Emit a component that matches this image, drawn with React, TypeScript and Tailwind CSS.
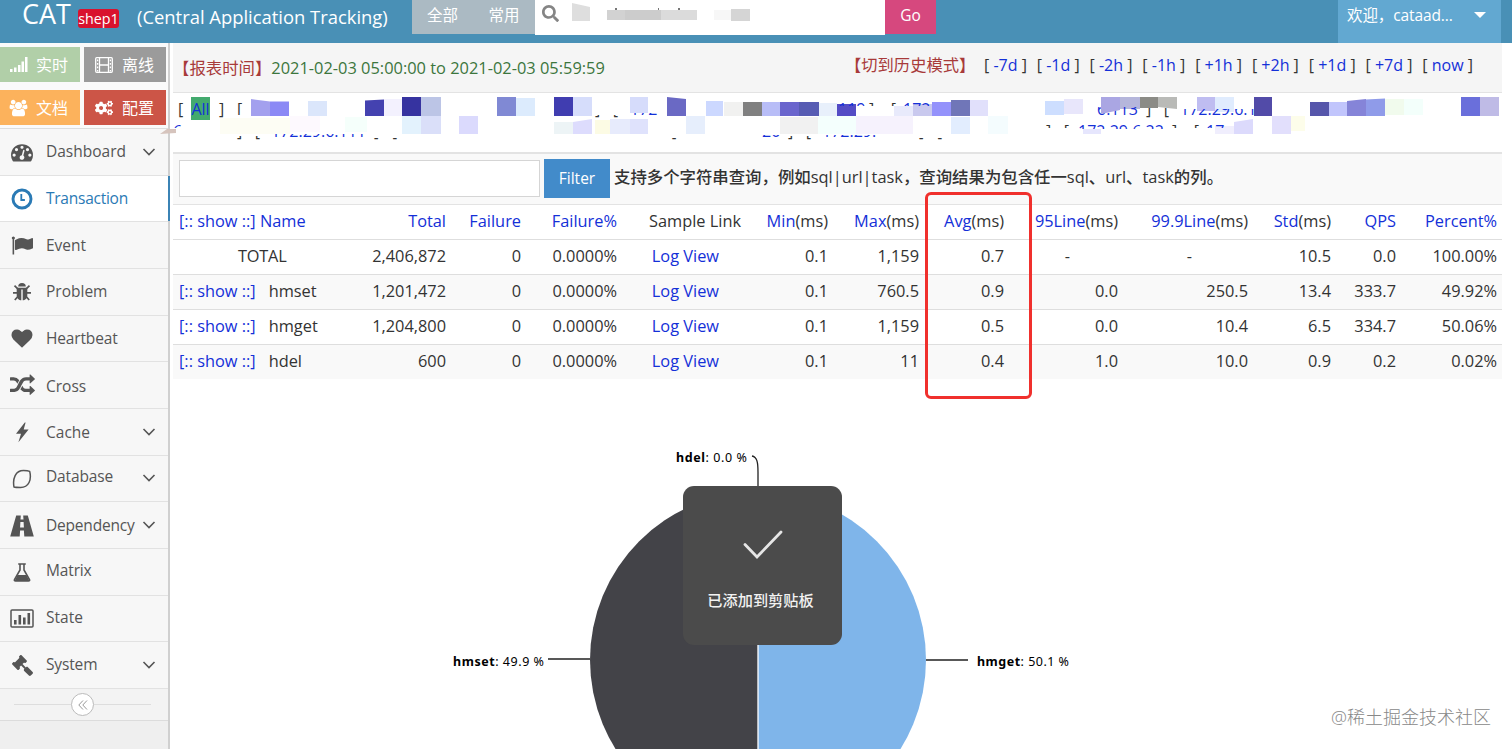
import React from "react";
import { FaCogs, FaGavel, FaSearch } from "react-icons/fa";

type IconName =
  | "dashboard" | "clock" | "flag" | "bug" | "heart" | "random" | "bolt"
  | "leaf" | "road" | "flask" | "chart" | "gavel";

function Icon({ name }: { name: IconName }) {
  switch (name) {
    case "dashboard":
      return (
        <svg width="22" height="22" viewBox="0 0 1792 1792" fill="currentColor">
          <path d="M384 1152q0-53-37.5-90.5t-90.5-37.5-90.5 37.5-37.5 90.5 37.5 90.5 90.5 37.5 90.5-37.5 37.5-90.5zm192-448q0-53-37.5-90.5t-90.5-37.5-90.5 37.5-37.5 90.5 37.5 90.5 90.5 37.5 90.5-37.5 37.5-90.5zm428 481l101-382q6-26-7.5-48.5t-38.5-29.5-48 6.5-30 39.5l-101 382q-60 5-107 43.5t-63 98.5q-20 77 20 146t117 89 146-20 89-117q16-60-6-117t-72-91zm660-33q0-53-37.5-90.5t-90.5-37.5-90.5 37.5-37.5 90.5 37.5 90.5 90.5 37.5 90.5-37.5 37.5-90.5zm-640-640q0-53-37.5-90.5t-90.5-37.5-90.5 37.5-37.5 90.5 37.5 90.5 90.5 37.5 90.5-37.5 37.5-90.5zm448 192q0-53-37.5-90.5t-90.5-37.5-90.5 37.5-37.5 90.5 37.5 90.5 90.5 37.5 90.5-37.5 37.5-90.5zm320 448q0 261-141 483-19 29-54 29h-1402q-35 0-54-29-141-221-141-483 0-182 71-348t191-286 286-191 348-71 348 71 286 191 191 286 71 348z" />
        </svg>
      );
    case "clock":
      return (
        <svg width="22" height="22" viewBox="0 0 22 22" fill="none" stroke="currentColor">
          <circle cx="11" cy="11" r="9" strokeWidth="2.9" />
          <path d="M11.200 6v6H7.600" strokeWidth="1.800" transform="matrix(-1 0 0 1 21.500 0)" />
        </svg>
      );
    case "flag":
      return (
        <svg width="22" height="21" viewBox="0 0 1792 1792" fill="currentColor" preserveAspectRatio="none">
          <path d="M320 256q0 72-64 110v1266q0 13-9.5 22.5t-22.5 9.5h-64q-13 0-22.5-9.5t-9.5-22.5v-1266q-64-38-64-110 0-53 37.5-90.5t90.5-37.5 90.5 37.5 37.5 90.5zm1472 64v763q0 25-12.5 38.5t-39.5 27.5q-215 116-369 116-61 0-123.5-22t-108.5-48-115.5-48-142.5-22q-192 0-464 146-17 9-33 9-26 0-45-19t-19-45v-742q0-32 31-55 21-14 79-43 236-120 421-120 107 0 200 29t219 88q38 19 88 19 54 0 117.5-21t110-47 88-47 54.5-21q26 0 45 19t19 45z" />
        </svg>
      );
    case "bug":
      return (
        <svg width="20" height="20" viewBox="0 0 20 20">
          <path d="M6.200 4.600a3.800 3.600 0 0 1 7.600 0z" fill="currentColor" />
          <path d="M4.700 5.800h10.600v7.400c0 3-2.300 5-4.600 5.100V7.400H9.300v10.900c-2.300-.1-4.600-2.100-4.600-5.100z" fill="currentColor" />
          <path d="M2.500 3.600 5.800 6.800M17.500 3.600l-3.300 3.200M1 10.800h4.500M19 10.800h-4.500M2.800 18l3.200-3.600M17.200 18 14 14.400" stroke="currentColor" strokeWidth="1.700" fill="none" />
        </svg>
      );
    case "heart":
      return (
        <svg width="22" height="21" viewBox="0 0 1792 1792" fill="currentColor">
          <path d="M896 1664q-26 0-44-18l-624-602q-10-8-27.5-26t-55.5-65.5-68-97.5-53.5-121-23.5-138q0-220 127-344t351-124q62 0 126.5 21.5t120 58 95.5 68.5 76 68q36-36 76-68t95.5-68.5 120-58 126.500-21.500q224 0 351 124t127 344q0 221-229 450l-623 600q-18 18-44 18z" />
        </svg>
      );
    case "random":
      return (
        <svg width="25" height="23" viewBox="0 0 1792 1792" fill="currentColor" preserveAspectRatio="none">
          <path d="M666 481q-60 92-137 273-22-45-37-72.500t-40.500-63.500-51-56.500-63-35-81.500-14.500h-224q-14 0-23-9t-9-23v-192q0-14 9-23t23-9h224q250 0 410 225zm1126 799q0 14-9 23l-320 320q-9 9-23 9-13 0-22.500-9.500t-9.500-22.500v-192q-32 0-85 .5t-81 1-73-1-71-5-64-10.500-63-18.500-58-28.500-59-40-55-53.500-56-69.500q59-93 136-273 22 45 37 72.500t40.500 63.500 51 56.500 63 35 81.500 14.500h256v-192q0-14 9-23t23-9q12 0 24 10l319 319q9 9 9 23zm0-896q0 14-9 23l-320 320q-9 9-23 9-13 0-22.500-9.500t-9.500-22.500v-192h-256q-48 0-87 15t-69 45-51 61.500-45 77.500q-32 62-78 171-29 66-49.500 111t-54 105-64 100-74 83-90 68.500-106.500 42-128 16.500h-224q-14 0-23-9t-9-23v-192q0-14 9-23t23-9h224q48 0 87-15t69-45 51-61.500 45-77.500q32-62 78-171 29-66 49.500-111t54-105 64-100 74-83 90-68.500 106.500-42 128-16.500h256v-192q0-14 9-23t23-9q12 0 24 10l319 319q9 9 9 23z" />
        </svg>
      );
    case "bolt":
      return (
        <svg width="14" height="21" viewBox="0 0 14 21" fill="currentColor">
          <path d="M9.800.5 1 11.800h5L3.400 20.300 13.600 7.600H8.700L10.600.5z" />
        </svg>
      );
    case "leaf":
      return (
        <svg width="20" height="20" viewBox="0 0 20 20" fill="none" stroke="currentColor" strokeWidth="1.500" strokeLinejoin="round">
          <path d="M2 18C.4 9.500 3.500 1.500 11.500 1.500c2.500 0 5 .3 6.200.9C19.700 10.500 17 18.500 8.500 18.500c-2.500 0-5 0-6.500-.5z" />
        </svg>
      );
    case "road":
      return (
        <svg width="24" height="22" viewBox="0 0 24 22" fill="currentColor">
          <path d="M6.200.5h4.600l-.3 4h3l-.3-4h4.600L23.800 21.500h-9.500l-.4-6h-3.800l-.4 6H.2zM10.400 7l-.3 5.500h3.800L13.600 7z" fillRule="evenodd" />
        </svg>
      );
    case "flask":
      return (
        <svg width="18" height="19" viewBox="0 0 18 19">
          <path d="M5.200 1h7.600M7 1v6L1.500 16.500c-.4.9 0 1.500 1 1.500h13c1 0 1.400-.6 1-1.500L11 7V1" fill="none" stroke="currentColor" strokeWidth="1.600" />
          <path d="M4.500 12h9l3 6h-15z" fill="currentColor" />
        </svg>
      );
    case "chart":
      return (
        <svg width="24" height="19" viewBox="0 0 24 19" fill="currentColor">
          <rect x="1" y="1" width="22" height="17" rx="1" fill="none" stroke="currentColor" strokeWidth="1.500" />
          <path d="M4 11h2.600v4.600H4zM8.500 6h2.600v9.600H8.500zM13 8.500h2.600v7.100H13zM17.500 4h2.600v11.600h-2.600z" />
        </svg>
      );
    case "gavel":
      return <FaGavel size={21} className="-scale-x-100" />;
  }
}

interface MenuEntry { label: string; icon: IconName; open?: boolean; active?: boolean; shift: string }

const MENU: MenuEntry[] = [
  { label: "Dashboard", icon: "dashboard", open: true, shift: "" },
  { label: "Transaction", icon: "clock", active: true, shift: "pt-px tracking-[-0.25px]" },
  { label: "Event", icon: "flag", shift: "" },
  { label: "Problem", icon: "bug", shift: "pb-px" },
  { label: "Heartbeat", icon: "heart", shift: "tracking-[-0.15px]" },
  { label: "Cross", icon: "random", shift: "pt-0.5" },
  { label: "Cache", icon: "bolt", open: true, shift: "pt-0.5" },
  { label: "Database", icon: "leaf", open: true, shift: "pb-[3px] tracking-[-0.15px]" },
  { label: "Dependency", icon: "road", open: true, shift: "tracking-[-0.2px]" },
  { label: "Matrix", icon: "flask", shift: "pb-0.5 tracking-[-0.15px]" },
  { label: "State", icon: "chart", shift: "pb-0.5" },
  { label: "System", icon: "gavel", open: true, shift: "pb-0.5 tracking-[-0.15px]" },
];

function Header() {
  return (
    <header className="flex h-[43px] items-start bg-[#4990b6] text-white">
      <div className="flex w-[412px] shrink-0 whitespace-nowrap pl-[22px]">
        <span className="w-[56px] text-[27px] leading-[28px]">CAT</span>
        <span className="mt-[9px] h-[19px] w-[41px] rounded-[3px] bg-[#d9122e] text-center text-[14.300px] leading-[19px]">shep1</span>
        <span className="mt-[4px] ml-[18px] text-[18.400px] leading-[26px]">(Central Application Tracking)</span>
      </div>
      <div className="flex h-[34px] w-[123px] shrink-0 bg-[#abbac3] text-[15.500px] leading-[31px]">
        <span className="w-[61px] text-center">全部</span>
        <span className="w-[62px] text-center">常用</span>
      </div>
      <div className="flex h-[35px] w-[350px] shrink-0 bg-white pl-[7px]">
        <FaSearch className="mt-[5px] shrink-0 text-[#858585]" size={17} />
        <svg width="220" height="24" className="ml-[13px] shrink-0">
          <path d="M-11 5H0v12h-11z" fill="#f9f9f9" />
          <path d="M0 3l18 4v14H0z" fill="#dedede" />
          <path d="M35 10h55v10H35z" fill="#d2d2d2" />
          <path d="M53 10h36v10H53z" fill="#cccccc" />
          <path d="M89 10h36v10H89z" fill="#dbdbdb" />
          <path d="M142 10h17v10h-17z" fill="#f7f7f7" />
          <path d="M159 9h19v12h-19z" fill="#d5d5d5" />
          <path d="M43 8h2v2h-2zM86 8h1v2h-1zM106 8h2v2h-2z" fill="#777" />
        </svg>
      </div>
      <div className="h-[34px] w-[51px] shrink-0 bg-[#d6487e] text-center text-[15.500px] leading-[31px]">Go</div>
      <div className="ml-auto mr-[11px] flex h-[43px] w-[163px] bg-[#62a8d1] pl-[9px] text-[15.500px] leading-[31px]">
        <span className="w-[127px] whitespace-nowrap tracking-[-0.1px]">欢迎，cataad...</span>
        <svg width="12" height="8" className="mt-[12px]"><path d="M0 0h12L6 6z" fill="#fff" /></svg>
      </div>
    </header>
  );
}

function Shortcuts() {
  return (
    <div className="grid h-[86px] grid-cols-[80px_82px] grid-rows-[35px_35px] gap-x-1 gap-y-[8px] border-b border-[#ddd] bg-[#fafafa] pt-[4px] text-[16px] text-white">
      <div className="flex items-center bg-[#b1cfa8] pl-[10px]">
        <svg width="18" height="15" fill="#fff"><path d="M0 12h2.500v3H0zM4 10.500h2.500V15H4zM8 8h2.500v7H8zM11.500 4.500H14V15h-2.500zM15 0h2.500v15H15z" /></svg>
        <span className="ml-[8px]">实时</span>
      </div>
      <div className="flex items-center bg-[#9b9b9b] pl-[11px]">
        <svg width="18" height="16" fill="none" stroke="#fff" strokeWidth="1.300">
          <rect x=".7" y=".7" width="16.600" height="14.600" rx="1" />
          <path d="M4.500 1v14M13.500 1v14M4.500 8h9" />
          <path d="M2.600 2.500v12M15.400 2.500v12" strokeDasharray="1.800 1.700" />
        </svg>
        <span className="ml-[9px]">离线</span>
      </div>
      <div className="flex items-center bg-[#fcb25c] pl-[9px]">
        <svg width="19" height="18" viewBox="0 0 2048 1792" fill="#fff">
          <path d="M657 896q-162 5-265 128h-134q-82 0-138-40.500t-56-118.500q0-353 124-353 6 0 43.500 21t97.500 42.500 119 21.500q67 0 133-23-5 37-5 66 0 139 81 256zm1071 637q0 120-73 189.500t-194 69.500h-874q-121 0-194-69.500t-73-189.500q0-53 3.500-103.500t14-109 26.500-108.500 43-97.500 62-81 85.500-53.500 111.500-20q10 0 43 21.500t73 48 107 48 135 21.500 135-21.500 107-48 73-48 43-21.500q61 0 111.500 20t85.500 53.500 62 81 43 97.500 26.500 108.500 14 109 3.500 103.500zm-1024-1277q0 106-75 181t-181 75-181-75-75-181 75-181 181-75 181 75 75 181zm704 384q0 159-112.500 271.500t-271.500 112.500-271.500-112.500-112.500-271.500 112.500-271.500 271.500-112.500 271.500 112.500 112.500 271.500zm576 225q0 78-56 118.500t-138 40.500h-134q-103-123-265-128 81-117 81-256 0-29-5-66 66 23 133 23 59 0 119-21.500t97.500-42.500 43.500-21q124 0 124 353zm-128-609q0 106-75 181t-181 75-181-75-75-181 75-181 181-75 181 75 75 181z" />
        </svg>
        <span className="ml-[8px]">文档</span>
      </div>
      <div className="flex items-center bg-[#cc5547] pl-[11px]">
        <FaCogs size={18} />
        <span className="ml-[9px]">配置</span>
      </div>
    </div>
  );
}

function Sidebar() {
  return (
    <aside className="flex w-[170px] shrink-0 flex-col border-r-2 border-[#d0d0d0] bg-[#efefef]">
      <Shortcuts />
      <nav className="grid h-[560px] grid-rows-12 bg-[#f7f7f7] text-[15.500px] text-[#555]">
        {MENU.map((m) => (
          <div
            key={m.label}
            className={
              "relative flex items-center border-b border-[#e2e2e2] " +
              (m.active ? "bg-white text-[#2a7ab5]" : "")
            }
          >
            <span className="flex w-[44px] justify-center pt-[1px]"><Icon name={m.icon} /></span>
            <span className={"ml-[2px] w-[95px] whitespace-nowrap " + m.shift}>{m.label}</span>
            {m.open && (
              <svg width="14" height="10" className="ml-px" fill="none" stroke="currentColor" strokeWidth="1.600"><path d="M1.500 2 7 7.500 12.500 2" /></svg>
            )}
            {m.active && <span className="absolute top-0 -right-[2px] h-full w-[2px] bg-[#3b83b5]" />}
          </div>
        ))}
      </nav>
      <div className="flex h-[32px] items-center border-b border-[#dcdcdc] bg-[#f3f3f3] pl-[14px]">
        <span className="h-px w-[57px] bg-[#ddd]" />
        <span className="flex h-[23px] w-[23px] items-center justify-center rounded-full border border-[#bbb] bg-white">
          <svg width="10" height="10" fill="none" stroke="#999"><path d="M5 .5.800 5 5 9.500M9 .5 4.800 5 9 9.500" /></svg>
        </span>
        <span className="h-px w-[57px] bg-[#ddd]" />
      </div>
    </aside>
  );
}

const STEPS = ["-7d", "-1d", "-2h", "-1h", "+1h", "+2h", "+1d", "+7d", "now"];

function ReportBar() {
  return (
    <div className="flex h-[50px] border-b border-[#e3e3e3] bg-[#f5f5f5] whitespace-nowrap">
      <div className="w-[672px] pt-[12px] text-[16.400px] leading-[26px] text-[#3c763d]">
        <span className="text-[#a83a3a]">【报表时间】</span>2021-02-03 05:00:00 to 2021-02-03 05:59:59
      </div>
      <div className="pt-[9px] text-[16.300px] leading-[26px] text-[#a83a3a]">【切到历史模式】</div>
      <div className="ml-auto mr-[29px] flex w-[489px] shrink-0 justify-between pt-[9px] text-[16px] leading-[26px] text-[#333]">
        {STEPS.map((s) => (
          <span key={s}>[ <a className="text-[#1430d8]">{s}</a> ]</span>
        ))}
      </div>
    </div>
  );
}

// x, y, width, height, colour of every block that masks an address
const BLOCKS: [number, number, number, number, string][] = [
  [308, 101, 19, 15, "#dbe6fb"], [384, 99, 18, 17, "#f3f1fe"], [402, 97, 19, 19, "#3633a0"],
  [421, 97, 20, 19, "#bcc5e6"], [497, 97, 19, 19, "#8089d4"], [516, 98, 19, 18, "#dcebfd"],
  [554, 97, 19, 19, "#403db0"], [573, 97, 19, 19, "#d6ddfb"], [630, 97, 18, 16, "#d6dcfb"],
  [706, 101, 17, 15, "#ccd8ff"], [724, 102, 19, 14, "#f1f1f0"], [743, 102, 19, 14, "#808080"],
  [762, 102, 18, 14, "#b8bdf7"], [780, 102, 19, 14, "#6a65cd"], [799, 102, 20, 14, "#575cb3"],
  [819, 103, 18, 13, "#e8f0fb"], [837, 104, 19, 12, "#544cc5"], [894, 106, 19, 10, "#e8eafb"],
  [913, 104, 19, 12, "#c9c9ee"], [932, 102, 19, 14, "#9492fb"], [951, 100, 19, 16, "#7076b8"],
  [970, 100, 18, 16, "#e1e0fb"], [1045, 101, 19, 14, "#cddeff"], [1064, 99, 19, 15, "#e8e6fb"],
  [1120, 97, 20, 12, "#b5b6db"], [1140, 97, 18, 11, "#8b8b86"],
  [1197, 97, 18, 14, "#bfbdf1"], [1215, 97, 19, 15, "#e0ecfe"], [1254, 97, 18, 19, "#524ba8"],
  [1310, 102, 19, 14, "#5656ab"], [1329, 102, 18, 14, "#c1c5fc"],
  [1385, 99, 19, 16, "#f1fbed"], [1404, 99, 19, 16, "#f3fffb"],
  [1461, 97, 19, 19, "#6a6fdb"], [1480, 97, 19, 19, "#bfbbe6"],
  [220, 118, 70, 16, "#fdfdf4"], [290, 116, 30, 16, "#fdf9fe"], [345, 117, 22, 15, "#f5fffb"],
  [402, 116, 19, 18, "#e3f2fd"], [421, 116, 20, 18, "#dadff9"], [459, 116, 19, 18, "#dbdafd"],
  [554, 122, 19, 12, "#edf4f6"], [595, 120, 15, 14, "#fcfbe4"],
  [610, 119, 20, 15, "#e7ebfc"], [630, 119, 18, 15, "#dfe2fc"], [686, 116, 19, 18, "#e6eefc"],
  [780, 117, 38, 17, "#f1f1f1"], [818, 116, 38, 18, "#f4fffd"], [856, 116, 57, 18, "#f6f2fd"],
  [951, 117, 19, 17, "#e2edfe"], [988, 116, 20, 18, "#f4fcfe"],
  [1083, 129, 18, 5, "#e6e6fd"], [1215, 126, 19, 8, "#f0eefd"], [1272, 116, 19, 18, "#e2dffc"],
  [1291, 116, 14, 15, "#fdfdea"],
];

const LINK = "#1430d8";
const INK = "#333";

// x, baseline, visible top, visible bottom, colour, text
const SCRAPS: [number, number, number, number, string, string][] = [
  [237, 115, 102, 115, INK, "["],
  [173, 137, 125, 128, LINK, "6"],
  [595, 115, 115, 118, INK, "]   ["],
  [630, 115, 113, 116, LINK, "172"],
  [237, 137, 136, 141, INK, "]   ["],
  [271, 137, 134, 138, LINK, "172.29.6.111"],
  [374, 137, 138, 141, INK, "]   ["],
  [838, 115, 103, 106, LINK, "119"],
  [869, 115, 103, 106, INK, "]    ["],
  [903, 115, 103, 106, LINK, "172."],
  [671, 137, 138, 141, INK, "["],
  [762, 137, 135, 138, LINK, "20"],
  [788, 137, 136, 141, INK, "]   ["],
  [822, 137, 135, 138, LINK, "172.29."],
  [919, 137, 138, 141, INK, "]   ["],
  [1097, 115, 107, 116, LINK, "6.113"],
  [1146, 115, 108, 119, INK, "]   ["],
  [1180, 115, 109, 116, LINK, "172.29.6.11"],
  [1046, 137, 125, 128, INK, "]   ["],
  [1078, 137, 125, 129, LINK, "172.29.6.22"],
  [1172, 137, 125, 128, INK, "]    ["],
  [1206, 137, 125, 128, LINK, "17"],
];

function AddressList() {
  return (
    <div className="relative h-[59px] bg-white text-[16px]">
      <div className="flex pt-[4px] pl-[5px] leading-[24px] text-[#333]">
        <span className="w-[13px]">[</span>
        <span className="h-[23px] w-[19px] bg-[#43aa6e] text-center text-[#1430d8]">All</span>
        <span className="ml-[9px]">]</span>
      </div>
      <svg className="absolute top-0 -left-[13px]" width="1352" height="59" viewBox="160 93 1352 59" fontFamily="'Open Sans'" fontSize="16">
        <path d="M251 99l19 2.500V116h-19z" fill="#a3a0ee" />
        <path d="M270 101.500h19V116h-19z" fill="#8b89f5" />
        <path d="M365 100.500l19-1V116h-19z" fill="#4442b0" />
        <path d="M667 97l19 2v17h-19z" fill="#6a69c4" />
        {BLOCKS.map(([x, y, w, h, c], i) => <rect key={i} x={x} y={y} width={w} height={h} fill={c} />)}
        {SCRAPS.map(([x, base, top, bottom, color, text], i) => (
          <g key={i}>
            <clipPath id={`scrap${i}`}><rect x={x - 4} y={top} width="110" height={bottom - top} /></clipPath>
            <text x={x} y={base} fill={color} clipPath={`url(#scrap${i})`} className="whitespace-pre">{text}</text>
          </g>
        ))}
        <path d="M1101 97h19v13l-19 4z" fill="#aaa6e3" />
        <path d="M1158 97h19v12l-19-2z" fill="#b9bab7" />
        <path d="M1254 97h18v19h-18z" fill="#524ba8" />
        <path d="M1347 101l19-2v17h-19z" fill="#8584d8" />
        <path d="M1366 99.500l19-1V116h-19z" fill="#8f9be9" />
        <path d="M573 122l19-3v15h-19z" fill="#dddcfd" />
        <path d="M1234 122l19-3v15h-19z" fill="#dcdafc" />
        <path d="M160 134l7-5h9v4z" fill="#d6c4bd" />
      </svg>
    </div>
  );
}

function FilterBar() {
  return (
    <div className="flex h-[53px] border-t-2 border-b border-[#e3e3e3] bg-[#f9f9f9] pt-[5px] pl-[6px] text-[15.500px]">
      <div className="mt-px h-[37px] w-[361px] shrink-0 border border-[#d5d5d5] bg-white" />
      <button className="ml-[4px] h-[39px] w-[66px] shrink-0 bg-[#428bca] text-white">Filter</button>
      <span className="ml-[4px] text-[16.400px] leading-[36px] font-medium whitespace-nowrap text-[#333]">
        支持多个字符串查询，例如sql|url|task，查询结果为包含任一sql、url、task的列。
      </span>
    </div>
  );
}

const GRID =
  "grid grid-cols-[278px_75px_96px_124px_87px_91px_85px_114px_130px_83px_65px_101px] items-center text-right";

const HEAD: [string, string][] = [
  ["Total", ""], ["Failure", ""], ["Failure%", ""], ["", ""], ["Min", "(ms)"], ["Max", "(ms)"],
  ["Avg", "(ms)"], ["95Line", "(ms)"], ["99.9Line", "(ms)"], ["Std", "(ms)"], ["QPS", ""], ["Percent%", ""],
];

const ROWS: string[][] = [
  ["TOTAL", "2,406,872", "0", "0.0000%", "Log View", "0.1", "1,159", "0.7", "-", "-", "10.5", "0.0", "100.00%"],
  ["hmset", "1,201,472", "0", "0.0000%", "Log View", "0.1", "760.5", "0.9", "0.0", "250.5", "13.4", "333.7", "49.92%"],
  ["hmget", "1,204,800", "0", "0.0000%", "Log View", "0.1", "1,159", "0.5", "0.0", "10.4", "6.5", "334.7", "50.06%"],
  ["hdel", "600", "0", "0.0000%", "Log View", "0.1", "11", "0.4", "1.0", "10.0", "0.9", "0.2", "0.02%"],
];

function ReportTable() {
  return (
    <div className="relative text-[16.350px] whitespace-nowrap text-[#333]">
      <div className={GRID + " h-[34px] pb-[2px]"}>
        <div className="flex justify-between pl-[6px] text-[#1430d8]"><span>[:: show ::] Name</span><span className="pr-[5px]">Total</span></div>
        {HEAD.slice(1).map(([a, b], i) =>
          a ? (
            <div key={i} className="pr-[5px]"><span className="text-[#1430d8]">{a}</span>{b}</div>
          ) : (
            <div key={i} className="pr-[5px]">Sample Link</div>
          )
        )}
      </div>
      {ROWS.map((r, i) => (
        <div key={i} className={GRID + " h-[35px] border-t border-[#dedede] pb-[2px] " + (i % 2 ? "bg-[#f9f9f9]" : "")}>
          <div className="flex justify-between pr-[5px] pl-[6px]">
            {i === 0 ? (
              <span className="pl-[59px] tracking-[-0.2px]">{r[0]}</span>
            ) : (
              <span><a className="text-[#1430d8]">[:: show ::]</a><span className="ml-[13px]">{r[0]}</span></span>
            )}
            <span>{r[1]}</span>
          </div>
          {r.slice(2).map((v, j) => (
            <div
              key={j}
              className={
                j === 2 ? "pr-[27px] text-[#1430d8]" :
                v === "-" ? (j === 6 ? "pr-[53px]" : "pr-[61px]") : "pr-[5px]"
              }
            >
              {v}
            </div>
          ))}
        </div>
      ))}
      <div className="absolute -top-[13px] left-[752px] h-[207px] w-[107px] rounded-[6px] border-[3px] border-[#f0302d]" />
    </div>
  );
}

function PieChart() {
  return (
    <div className="relative h-[370px] overflow-hidden">
      <svg width="1339" height="370" viewBox="173 379 1339 370" fontFamily="'Noto Sans','Open Sans',sans-serif" fontSize="12.500" fill="#000">
        <path d="M758 492a168 168 0 0 0 0 336z" fill="#434348" />
        <path d="M758 492a168 168 0 0 1 0 336z" fill="#7fb5ea" />
        <path d="M758 492v260" stroke="#fff" strokeWidth="1.300" />
        <g fill="none" stroke="#222" strokeWidth="1.300">
          <path d="M752 456c5 1 6 6 6 16v22M548 659h42M926 660h42" />
        </g>
        <text x="676" y="462" textLength="71"><tspan fontWeight="700">hdel</tspan>: 0.0 %</text>
        <text x="453" y="666" textLength="91"><tspan fontWeight="700">hmset</tspan>: 49.9 %</text>
        <text x="977" y="666" textLength="92"><tspan fontWeight="700">hmget</tspan>: 50.1 %</text>
      </svg>
      <div className="absolute top-[107px] left-[510px] flex h-[159px] w-[159px] flex-col items-center rounded-[11px] bg-[#4b4b4b] text-[15.200px] font-medium text-[#f2f2f2]">
        <svg width="42" height="32" className="mt-[43px]" fill="none" stroke="#e6e6e6" strokeWidth="2.800" strokeLinecap="round">
          <path d="M3 15.500 15 28 39 3" />
        </svg>
        <span className="mt-[28px] mr-[4px]">已添加到剪贴板</span>
      </div>
      <div className="absolute right-[21px] bottom-[19px] text-[18px] leading-[26px] font-light text-[#888]">@稀土掘金技术社区</div>
    </div>
  );
}

export default function App() {
  return (
    <div className="h-[749px] w-[1512px] overflow-hidden bg-white font-['Open_Sans','Noto_Sans_CJK_SC',sans-serif]">
      <Header />
      <div className="flex h-[706px]">
        <Sidebar />
        <main className="w-[1342px] pl-[3px]">
          <div className="w-[1329px]">
            <ReportBar />
            <AddressList />
            <FilterBar />
            <ReportTable />
          </div>
          <PieChart />
        </main>
      </div>
    </div>
  );
}
